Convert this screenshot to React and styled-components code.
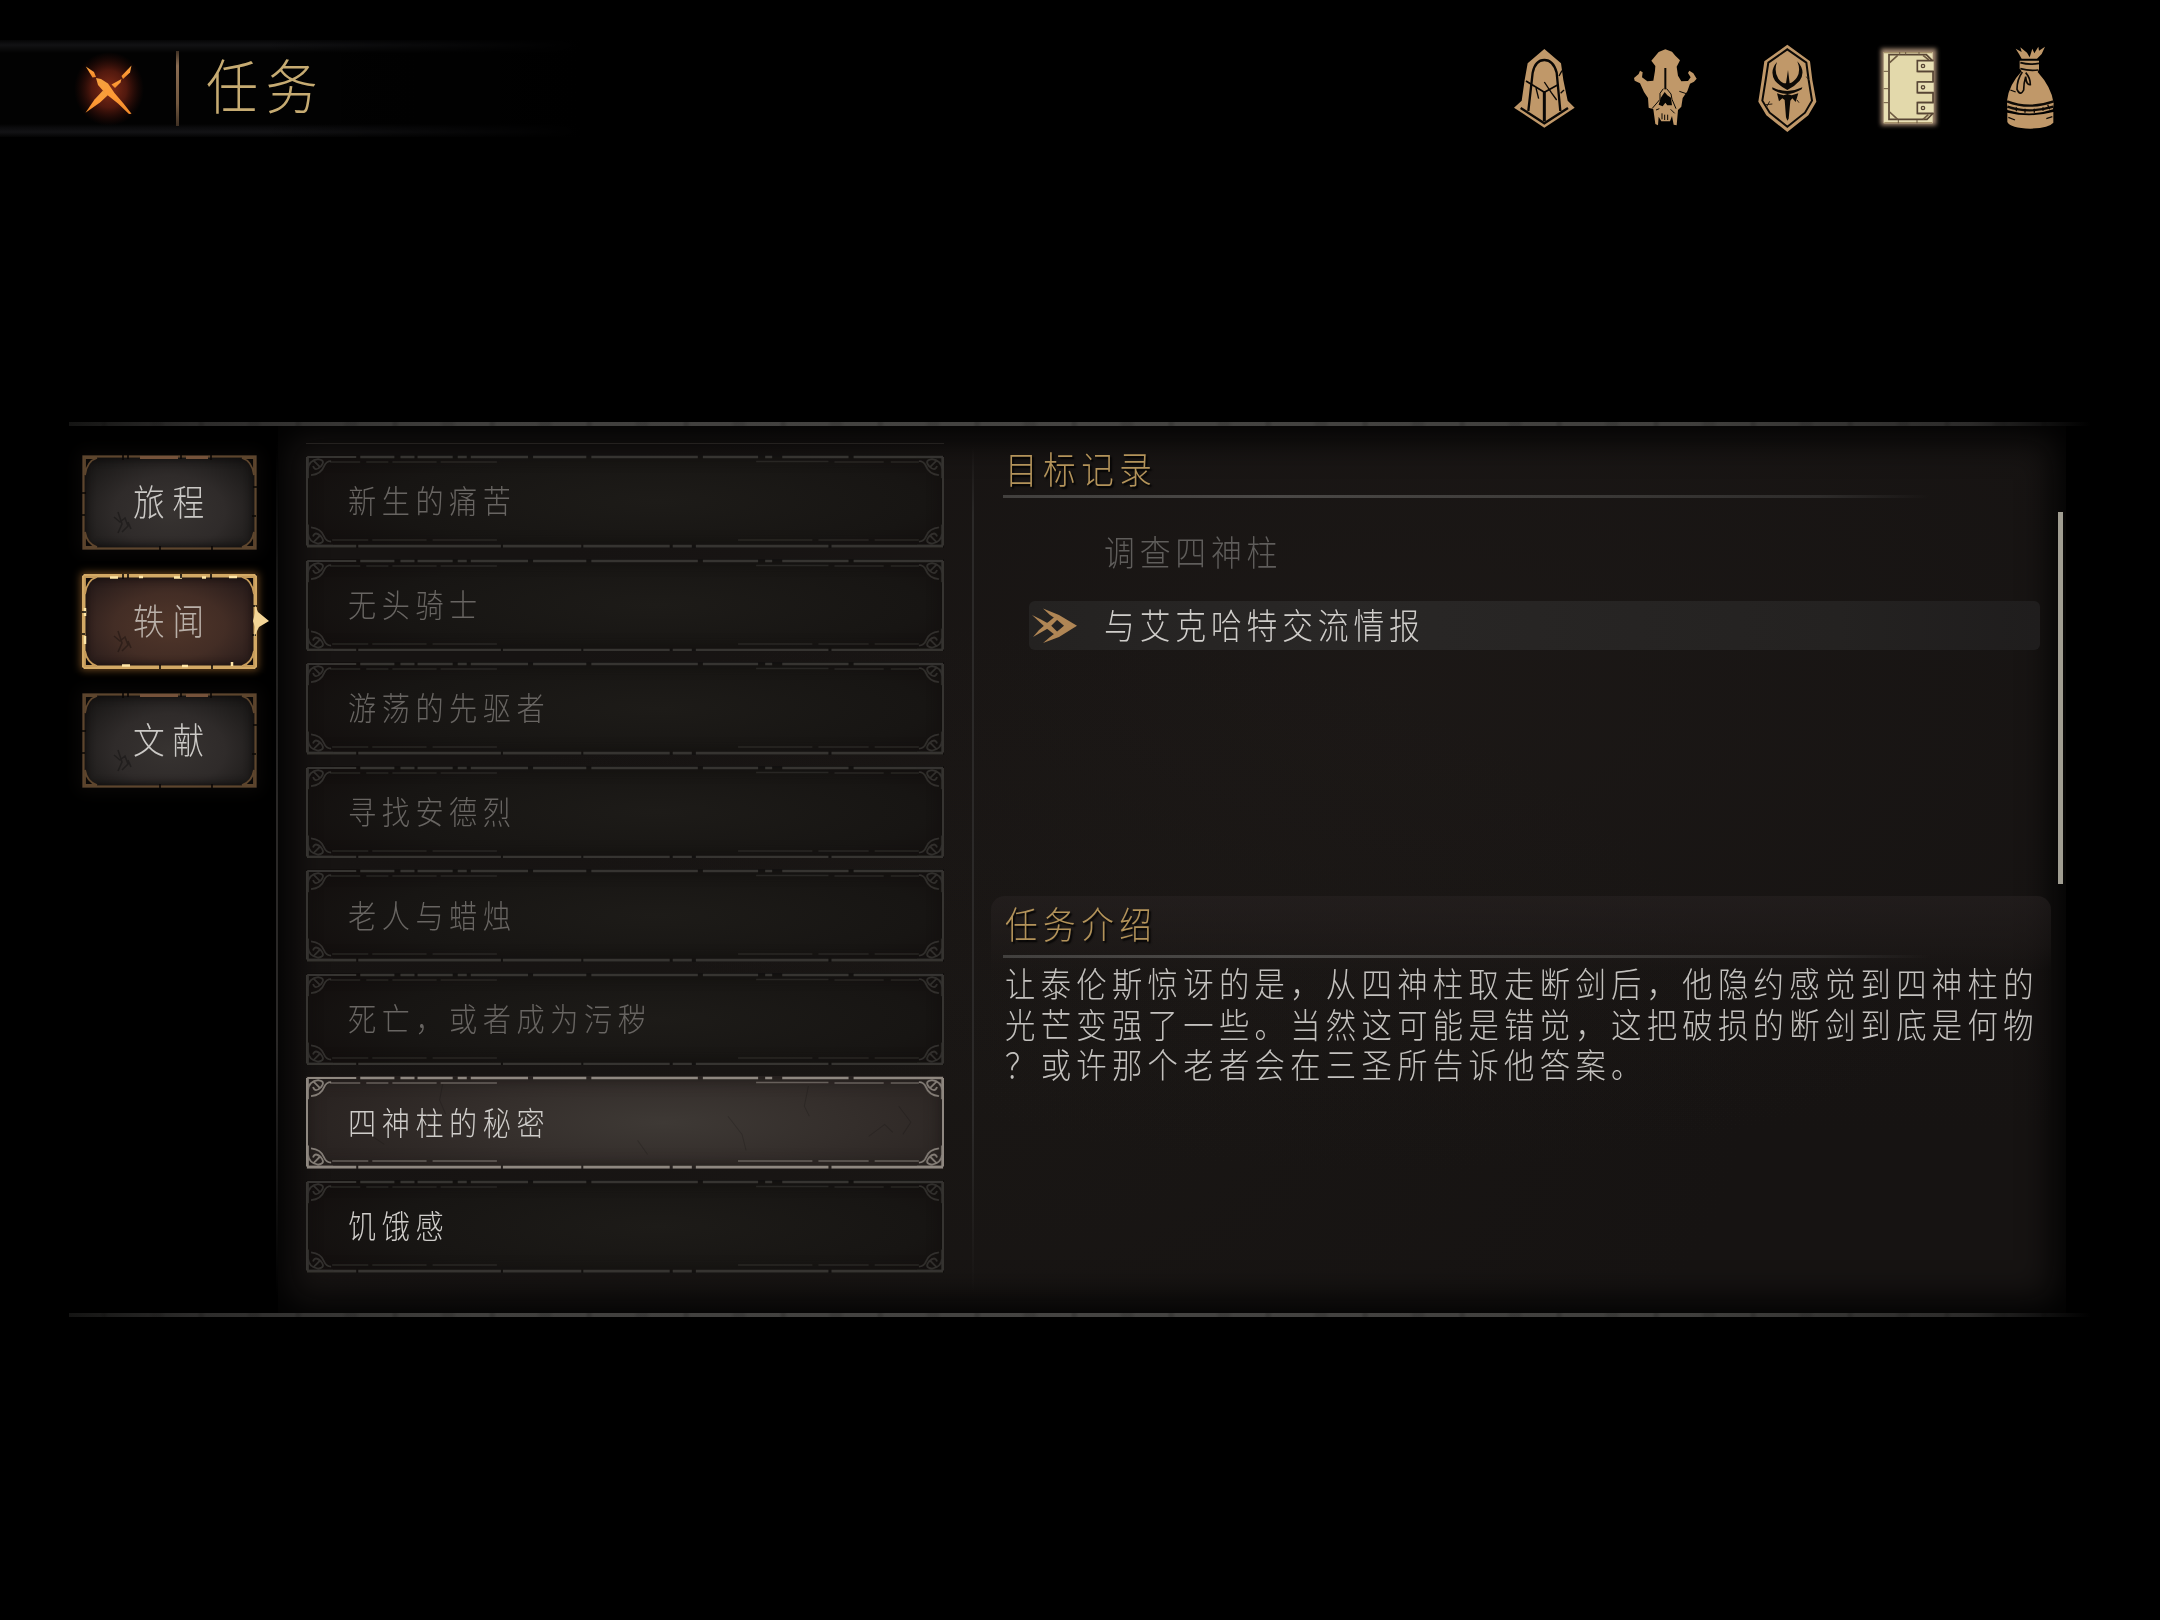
import styled, { createGlobalStyle, css } from "styled-components";
import { useState } from "react";

const tabs = ["旅程", "轶闻", "文献"];

const quests = [
  { name: "新生的痛苦", done: true },
  { name: "无头骑士", done: true },
  { name: "游荡的先驱者", done: true },
  { name: "寻找安德烈", done: true },
  { name: "老人与蜡烛", done: true },
  { name: "死亡，或者成为污秽", done: true },
  { name: "四神柱的秘密", done: false },
  { name: "饥饿感", done: false },
];

const objectives = [
  { text: "调查四神柱", active: false },
  { text: "与艾克哈特交流情报", active: true },
];

const story = [
  "让泰伦斯惊讶的是，从四神柱取走断剑后，他隐约感觉到四神柱的",
  "光芒变强了一些。当然这可能是错觉，这把破损的断剑到底是何物",
  "？或许那个老者会在三圣所告诉他答案。",
];

const CloseIcon = () => (
  <svg width="80" height="80" viewBox="0 0 80 80">
    <defs>
      <radialGradient id="ember">
        <stop offset="0" stopColor="#8e3018" stopOpacity=".95" />
        <stop offset=".5" stopColor="#6b2012" stopOpacity=".75" />
        <stop offset="1" stopColor="#400f08" stopOpacity="0" />
      </radialGradient>
      <linearGradient id="blade" x1="0" y1="0" x2="0" y2="1">
        <stop offset="0" stopColor="#f3a03f" />
        <stop offset=".5" stopColor="#ff9a35" />
        <stop offset="1" stopColor="#f08a2a" />
      </linearGradient>
    </defs>
    <ellipse cx="40" cy="40" rx="35" ry="37" fill="url(#ember)" />
    <g fill="url(#blade)">
      <path d="M62.5 16.5L61 23.500L54 30L52.5 27Z" />
      <path d="M52.500 30L51.5 33.500L46 39L42.500 35.500Z" />
      <path d="M39 46L31 53.5L16.5 63.8L25.5 50.5L34 41.5Z" />
      <path d="M16.8 17.5L25 23L27 28L23.5 28.5Z" />
      <path d="M27 29L32 30L39 34.500L45.500 44L54.500 54.500L62.500 64.8L60 65L49 54.5L36.5 44.500L29 36Z" />
    </g>
  </svg>
);

const HoodIcon = () => (
  <svg width="120" height="120" viewBox="-15 0 360 360">
    <path d="M163 57L213 100L220 150L233 212L254 233L163 293L72 233L95 212L104 150L113 100Z" fill="#c09869" />
    <g fill="none" stroke="#090705" strokeWidth="7">
      <path d="M115 243L128 128Q136 90 163 90Q190 90 200 128L211 243" />
      <path d="M92 234L163 280L234 234" />
      <path d="M108 153L163 187L204 164" strokeWidth="5" />
      <path d="M163 184V274" strokeWidth="9" />
      <path d="M163 156L184 188L200 210M138 174L146 206M216 122L207 138M222 180L212 190" strokeWidth="4" />
    </g>
  </svg>
);

const SkullIcon = () => (
  <svg width="120" height="120" viewBox="350 0 360 360">
    <path
      d="M528 58L548 65L558 77L572 91L562 110L566 137L576 154L596 153L604 142L596 129L600 122L612 130L622 146L614 155L602 161L594 184L580 204L576 230L566 240L562 286L553 284L548 258L542 274L516 274L508 260L506 286L498 282L492 238L478 233L476 204L464 186L452 160L436 152L434 144L448 132L452 122L460 127L458 142L474 154L492 152L497 122L498 108L486 92L498 78L508 66Z"
      fill="#c09869"
    />
    <g fill="none" stroke="#0a0805" strokeWidth="4">
      <path d="M528 114V178" strokeWidth="6" />
      <path d="M522 176L512 190V208L488 236M532 176L545 192L548 208L560 236M570 184L594 192" strokeWidth="3" />
      <path d="M518 250V268M526 254V270M535 254V270M544 238L556 250M500 240L510 236" strokeWidth="3" />
    </g>
    <path d="M526 186L534 196L545 203L548 226L534 226L528 218L520 229L508 224L514 204Z" fill="#050402" />
  </svg>
);

const ShieldIcon = () => (
  <svg width="120" height="120" viewBox="-35 0 360 360">
    <path d="M143 44L211 94L218 150L230 215L206 256L143 306L80 256L56 215L66 150L74 94Z" fill="#c09869" />
    <path d="M143 58L200 98L207 150L217 212L196 248L143 290L90 248L68 212L78 150L86 98Z" fill="none" stroke="#0c0906" strokeWidth="6" />
    <g fill="#0c0906">
      <path d="M112 96Q88 124 106 152Q118 166 143 180Q166 168 180 152Q200 124 173 94Q184 122 172 142Q163 156 150 160L145 120L139 160Q126 160 116 146Q102 124 112 96Z" />
      <path d="M98 172Q142 194 188 172L186 178Q162 192 143 192Q118 192 98 178Z" />
      <path d="M112 190L132 196L143 192L156 196L176 190L168 216L158 205L152 212L147 266L143 272L139 262L135 210L128 205L118 214Z" />
    </g>
    <path d="M78 224L98 222M80 232L90 214M200 140L206 148M172 210L178 218" stroke="#2b2015" strokeWidth="3" fill="none" />
  </svg>
);

const BookIcon = () => (
  <svg width="120" height="120" viewBox="329 0 360 360">
    <defs>
      <filter id="bookGlow" x="-30%" y="-30%" width="160%" height="160%">
        <feGaussianBlur stdDeviation="7" />
      </filter>
    </defs>
    <rect x="422" y="56" width="166" height="230" fill="#a58a72" filter="url(#bookGlow)" />
    <path d="M430 66H577V280H430Z" fill="#e8dfb4" />
    <path d="M446 74H558L576 92V94H534V124H578V156H534V188H578V218H534V250H576V252L560 268H446Z" fill="#e3d9ab" stroke="#574534" strokeWidth="5" />
    <g fill="none" stroke="#6e5a42" strokeWidth="4">
      <path d="M430 68H576M432 278H576" stroke="#a8946c" />
      <path d="M448 98L472 76M448 246L472 268M548 76L566 90M548 268L564 254" strokeWidth="5" />
      <path d="M430 124H444M430 176H444M430 218H444M478 66V74M496 66V74M536 66V74M474 270V280M530 270V280" strokeWidth="3" />
    </g>
    {[92, 156, 218].map((y) => (
      <g key={y}>
        <rect x="531" y={y} width="49" height="31" fill="#e8dfb4" />
        <path d={`M580 ${y}H531V${y + 32}H580`} fill="none" stroke="#574534" strokeWidth="5" />
        <circle cx="548" cy={y + 16} r="5" fill="none" stroke="#574534" strokeWidth="4" />
      </g>
    ))}
  </svg>
);

const BagIcon = () => (
  <svg width="120" height="120" viewBox="694 0 360 360">
    <g fill="#c09869">
      <path d="M828 56L846 66L842 52L862 68L870 82L878 56L884 70L896 50L898 62L916 50L906 72L892 86H846L838 72Z" />
      <path d="M840 92H898V118L894 126Q936 172 942 220L940 238Q872 262 803 240L802 212Q808 164 846 124L840 116Z" />
      <path d="M803 248Q872 264 941 246V278Q928 294 872 296Q812 294 803 276Z" />
    </g>
    <g fill="none" stroke="#0e0a06" strokeWidth="5">
      <path d="M842 98Q870 106 898 100M842 116Q870 124 896 120" />
      <path d="M848 126Q832 148 832 178Q842 200 852 180Q852 160 858 140Q860 166 872 164Q872 144 858 128" />
      <path d="M802 214Q868 240 942 214M803 230Q868 252 941 230" strokeWidth="7" />
      <path d="M812 180L828 186M830 232V244M856 236V248M884 236V248M910 232V242M806 262L826 270M920 266L938 260M924 224L930 238" strokeWidth="4" />
    </g>
  </svg>
);

const navIcons = [HoodIcon, SkullIcon, ShieldIcon, BookIcon, BagIcon];

// chipped metal border of the tab buttons
const TabFrame = ({ active }) => (
  <FrameArt viewBox="0 0 175 95" preserveAspectRatio="none">
    <rect
      x="1.5"
      y="1.5"
      width="172"
      height="92"
      rx={active ? 3 : 0}
      fill="none"
      stroke={active ? "#d3a965" : "#5d452d"}
      strokeWidth={active ? 4 : 2.2}
    />
    <g fill={active ? "#120c0b" : "#0b0908"} stroke={active ? "#c79c5b" : "#5d452d"} strokeWidth="1.8">
      <path d="M3 3H15Q5 6 3 20Z" />
      <path d="M172 3H160Q170 6 172 20Z" />
      <path d="M3 92H15Q5 89 3 77Z" />
      <path d="M172 92H160Q170 89 172 77Z" />
    </g>
    {active ? (
      <path d="M28 3.500h8M57 3h4M92 3.500h8M120 3.500h4M3 34v8M3 62v8M40 91.500h8M100 92h6M147 3h8M150 88v4" stroke="#ffe6a6" strokeWidth="2.500" />
    ) : (
      <path d="M58 2.500h38M104 2.500h22" stroke="#75523a" strokeWidth="3" />
    )}
    <path
      d="M41 0v5M46 0v4M99 0v4M129 0v5M78 91v4M130 91v4M0 38h4M0 60h3M171 32h4M170 61h4"
      stroke="#0a0705"
      strokeWidth="1.600"
    />
    {/* crack in the stone */}
    <path d="M32 62l6 5 5-4 3 8-6 6M36 57l4 12-4 9M46 67l3 7" fill="none" stroke="#000" strokeOpacity=".3" strokeWidth="1.6" />
  </FrameArt>
);

const corner = "M2 23V2H27M2 14Q3 5 12 4Q20 5 15 11Q9 17 7 11M5 20Q15 19 18 11Q20 6 25 6M8 6L14 12";

const QuestFrame = ({ active }) => (
  <FrameArt viewBox="0 0 635 92" preserveAspectRatio="none">
    <g fill="none" stroke={active ? "#8f8881" : "#363431"} strokeWidth="2">
      <path d="M1 2V90M634 2V90" />
      <path d="M2 2H50" />
      <path d="M54 2H88M94 2H108M111 2H146M151 2H160M164 2H221M226 2H279M284 2H390M395 2H450M457 2H464M474 2H540M545 2H634" strokeWidth="2.400" />
      <path d="M1 90.500H50M52 90.500H194M196 90.500H274M276 90.500H362M365 90.500H384M388 90.500H520M523 90.500H634" strokeWidth="2.800" />
      <g strokeWidth="1.500" opacity=".6">
        <path d="M24 7H54M60 7H82M86 7H130M134 7H190M448 6.500H520M526 7H575M582 7H610" />
        <path d="M26 84.500H62M66 84.500H120M126 84.500H190M430 84.500H504M510 84.500H560M566 84.500H610" />
      </g>
      <g strokeWidth="1.800" opacity=".9">
        <path d={corner} />
        <path d={corner} transform="matrix(-1 0 0 1 635 0)" />
        <path d={corner} transform="matrix(1 0 0 -1 0 92)" />
        <path d={corner} transform="matrix(-1 0 0 -1 635 92)" />
      </g>
    </g>
    {active && (
      <path
        d="M136 8l-3 16 6 14M420 40l14 18 4 16M500 10l-4 20 5 10M560 60l16-12 8 8M330 64l10 14M590 30l12 16-8 12M66 60l12 8"
        fill="none"
        stroke="#000"
        strokeOpacity=".16"
      />
    )}
  </FrameArt>
);

const MarkerIcon = () => (
  <svg width="46" height="38" viewBox="0 0 46 38">
    <g fill="#b08655">
      <path d="M11 1.500L27 8L45 18.700L27 30L11 36L18 30L24 25.500L32 18.700L24 12L18 8Z" />
      <path d="M0 8L9 12.500L18 17.500L26 25.500L23 28L13.500 20.500Z" />
      <path d="M1 30L7 23L14 17L23 9.500L26 12L17.500 20.500Z" />
      <circle cx="15.500" cy="18.700" r="3" />
    </g>
  </svg>
);

const App = () => {
  const [tab, setTab] = useState(1);
  const [quest, setQuest] = useState(6);

  return (
    <Screen>
      <GlobalStyle />
      <Header>
        <TitleBar>
          <CloseButton>
            <CloseIcon />
          </CloseButton>
          <TitleDivider />
          <Title>任务</Title>
        </TitleBar>
        <Nav>
          {navIcons.map((Icon, i) => (
            <NavSlot key={i}>
              <Icon />
            </NavSlot>
          ))}
        </Nav>
      </Header>
      <Panel>
        <WornLine />
        <PanelBody>
          <TabColumn>
            {tabs.map((name, i) => (
              <Tab key={name} $active={i === tab} onClick={() => setTab(i)}>
                <TabFrame active={i === tab} />
                <TabText>{name}</TabText>
                {i === tab && (
                  <TabPointer width="18" height="40" viewBox="0 0 18 40">
                    <path d="M3 4L6 11L17 20L7 26L2 36L3 26L1 20L3 12Z" fill="#f3d596" />
                  </TabPointer>
                )}
              </Tab>
            ))}
          </TabColumn>
          <ColumnEdge />
          <Content>
            <QuestColumn>
              <ListEdge />
              {quests.map((q, i) => (
                <Quest key={q.name} $active={i === quest} $done={q.done} onClick={() => setQuest(i)}>
                  <QuestFrame active={i === quest} />
                  <QuestText>{q.name}</QuestText>
                </Quest>
              ))}
            </QuestColumn>
            <ColumnDivider />
            <Detail>
              <ObjectiveSection>
                <Heading>目标记录</Heading>
                <Rule />
                <ScrollArea>
                  <ObjectiveList>
                    {objectives.map((o) => (
                      <Objective key={o.text} $active={o.active}>
                        <MarkerSlot>{o.active && <MarkerIcon />}</MarkerSlot>
                        <ObjectiveText>{o.text}</ObjectiveText>
                      </Objective>
                    ))}
                  </ObjectiveList>
                  <Scrollbar />
                </ScrollArea>
              </ObjectiveSection>
              <StorySection>
                <Heading>任务介绍</Heading>
                <Rule $low />
                <Story>
                  {story.map((line) => (
                    <StoryLine key={line}>{line}</StoryLine>
                  ))}
                </Story>
              </StorySection>
            </Detail>
          </Content>
        </PanelBody>
        <WornLine />
      </Panel>
    </Screen>
  );
};

const GlobalStyle = createGlobalStyle`
  *{
    box-sizing:border-box;
  }
  body{
    margin:0;
    background-color:#000;
  }
`;

// narrow lettering: glyphs are squeezed to 88% of their width
const narrow = css`
  display:block;
  white-space:nowrap;
  transform:scaleX(0.88);
  transform-origin:left center;
`;

const Screen = styled.div`
  width:2160px;
  height:1620px;
  overflow:hidden;
  background-color:#000;
  font-family:"Noto Sans CJK SC", sans-serif;
  font-weight:300;
`;

const Header = styled.header`
  display:flex;
  justify-content:space-between;
  align-items:flex-start;
  height:150px;
  padding:30px 68px 0 0;
`;

const TitleBar = styled.div`
  display:flex;
  align-items:center;
  width:580px;
  height:97px;
  margin-top:10px;
  padding-left:69px;
  background:
    linear-gradient(90deg, transparent 45%, #000 100%),
    linear-gradient(#050506 0, #121214 5px, #0c0c0d 8px, #020202 13px, #020202 84px, #0c0c0e 88px, #131315 92px, #040404 97px);
`;

const CloseButton = styled.button`
  width:80px;
  height:80px;
  padding:0;
  border:none;
  background:none;
`;

const TitleDivider = styled.div`
  width:3px;
  height:75px;
  margin-left:27px;
  background:linear-gradient(#3f3023, #8a6c52 20%, #72583f 70%, #3f3023);
`;

const Title = styled.h1`
  ${narrow}
  margin:0 0 9px 27px;
  font-size:59px;
  line-height:64px;
  font-weight:300;
  letter-spacing:9px;
  color:#c6ab72;
`;

const Nav = styled.nav`
  display:flex;
`;

const NavSlot = styled.div`
  display:flex;
  justify-content:center;
  width:121.6px;
`;

const Panel = styled.main`
  display:flex;
  flex-direction:column;
  width:2022px;
  height:895px;
  margin:272px 69px 0;
`;

const WornLine = styled.div`
  height:4px;
  flex:none;
  background:
    repeating-linear-gradient(90deg, transparent 0 31px, rgba(0,0,0,0.14) 34px 36px, transparent 40px 79px, rgba(0,0,0,0.1) 84px 92px, transparent 97px),
    linear-gradient(90deg, #141413, #2c2b2a 6%, #403f3d 20%, #454442 50%, #403f3d 80%, #2c2b2a 94%, transparent);
`;

const PanelBody = styled.div`
  display:flex;
  flex:1;
  padding-right:25px;
`;

const TabColumn = styled.div`
  display:flex;
  flex-direction:column;
  gap:24px;
  width:207px;
  padding:29px 0 0 13px;
`;

const ColumnEdge = styled.div`
  width:2px;
  margin:16px 0;
  background:linear-gradient(transparent, #1d1c1b 20%, #2a2827 40%, #2a2827 70%, transparent);
`;

const FrameArt = styled.svg`
  position:absolute;
  inset:0;
  width:100%;
  height:100%;
`;

const Tab = styled.button`
  position:relative;
  display:flex;
  align-items:center;
  width:175px;
  height:95px;
  padding:0 0 6px 51px;
  border:none;
  font:inherit;
  color:${(p) => (p.$active ? "#b9b0a9" : "#cbc9c6")};
  background:${(p) => (p.$active
    ? "radial-gradient(ellipse at 50% 55%, #50362a 0%, #432d25 45%, #2a1d1b 80%, #1a1315 100%)"
    : "radial-gradient(ellipse at 50% 60%, #373331 0%, #2f2b2a 45%, #1c1a19 80%, #100e0e 100%)")};
  box-shadow:${(p) => (p.$active
    ? "0 0 8px 1px rgba(190,125,55,0.6), inset 0 0 8px 4px #140d0c"
    : "0 0 16px 4px rgba(40,32,26,0.25), inset 0 0 8px 4px #0e0c0b")};
`;

const TabText = styled.span`
  ${narrow}
  font-size:36px;
  letter-spacing:9px;
`;

const TabPointer = styled.svg`
  position:absolute;
  right:-13px;
  top:27px;
`;

const Content = styled.section`
  display:flex;
  flex:1;
  background:
    radial-gradient(ellipse at 62% 30%, rgba(44,38,34,0.25), transparent 55%),
    radial-gradient(ellipse at 40% 75%, rgba(36,33,28,0.22), transparent 50%),
    #161312;
  box-shadow:inset 0 0 34px 12px #020202;
`;

const QuestColumn = styled.div`
  display:flex;
  flex-direction:column;
  gap:11px;
  width:638px;
  margin-left:28px;
  padding-top:17px;
`;

const ListEdge = styled.div`
  height:1px;
  flex:none;
  background-color:#24211f;
`;

const Quest = styled.button`
  position:relative;
  display:flex;
  align-items:center;
  flex:none;
  width:100%;
  height:92.57px;
  padding:0 0 4px 42px;
  border:none;
  font:inherit;
  color:${(p) => (p.$done ? "#686562" : "#cfcdca")};
  background:${(p) => (p.$active
    ? "radial-gradient(ellipse 60% 90% at 56% 50%, #3e3935 0%, #342e2b 50%, #282220 100%)"
    : "radial-gradient(ellipse 60% 80% at 55% 50%, #1d1b18 0%, #171513 70%, #130f0e 100%)")};
  box-shadow:${(p) => (p.$active ? "inset 0 0 16px 2px #1d1817" : "inset 0 0 14px 2px #110f0e")};
`;

const QuestText = styled.span`
  ${narrow}
  font-size:32px;
  letter-spacing:6.300px;
`;

const ColumnDivider = styled.div`
  width:2px;
  margin:22px 17px 20px 28px;
  background:linear-gradient(transparent, #2b2928 8%, #2b2928 80%, transparent);
`;

const Detail = styled.div`
  display:flex;
  flex-direction:column;
  flex:1;
`;

const ObjectiveSection = styled.div`
  display:flex;
  flex-direction:column;
  height:470px;
  padding:20px 0 0 12px;
`;

const Heading = styled.h2`
  ${narrow}
  margin:0 0 0 2px;
  font-size:37px;
  line-height:44px;
  font-weight:300;
  letter-spacing:6.300px;
  color:#b3935a;
  text-shadow:2px 2px 2px #000;
`;

const Rule = styled.div`
  flex:none;
  width:927px;
  height:3px;
  margin-top:${(p) => (p.$low ? 10 : 5)}px;
  background:linear-gradient(90deg, #42403e, #4a4846 30%, #3a3836 65%, #2e2c2b 88%, transparent);
`;

const ScrollArea = styled.div`
  display:flex;
  justify-content:space-between;
  height:372px;
  margin-top:14px;
  padding:0 3px 0 26px;
`;

const ObjectiveList = styled.div`
  display:flex;
  flex-direction:column;
  gap:24px;
  width:1011px;
  padding-top:16px;
`;

const Objective = styled.div`
  display:flex;
  align-items:center;
  height:49px;
  border-radius:6px;
  color:${(p) => (p.$active ? "#cfcdca" : "#5f5d5b")};
  background:${(p) => (p.$active ? "linear-gradient(90deg, #242221, #292726 30%, #242221 80%, #1f1d1d)" : "none")};
`;

const MarkerSlot = styled.div`
  display:flex;
  width:75px;
  padding:0 0 0 3px;
`;

const ObjectiveText = styled.span`
  ${narrow}
  padding-bottom:4px;
  font-size:35px;
  line-height:45px;
  letter-spacing:5.500px;
`;

const Scrollbar = styled.div`
  width:5px;
  height:372px;
  background-color:#a09d91;
`;

const StorySection = styled.div`
  flex:1;
  width:1060px;
  padding:5px 0 0 12px;
  border-radius:14px 14px 0 0;
  background:linear-gradient(rgba(42,36,36,0.5), rgba(34,29,28,0.4) 50px, rgba(30,26,24,0.1) 75px, transparent 240px);
`;

const Story = styled.div`
  margin-top:4px;
  color:#c3c1be;
`;

const StoryLine = styled.p`
  ${narrow}
  margin:0 0 0 2px;
  font-size:34.500px;
  line-height:40.700px;
  letter-spacing:6.010px;
`;

export default App;
